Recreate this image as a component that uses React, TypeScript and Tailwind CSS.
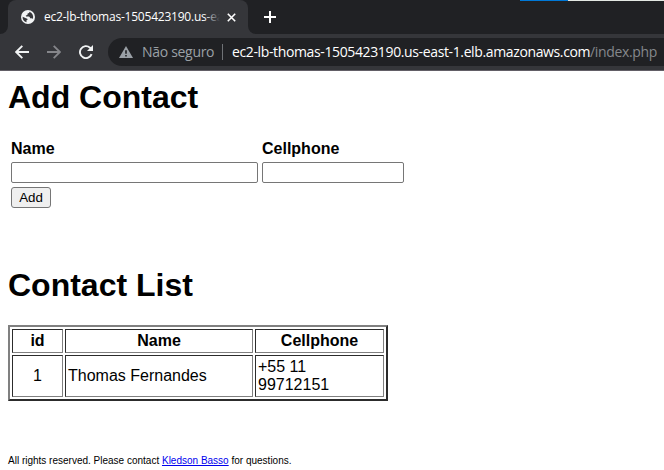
import React from 'react';

const uiFont = "font-['Open_Sans','Noto_Sans',sans-serif]";
const cell =
  'border border-t-[#2c2c2c] border-l-[#2c2c2c] border-r-[#808080] border-b-[#808080] flex items-center';

function GlobeIcon() {
  return (
    <svg className="shrink-0" width="14" height="14" viewBox="0 0 14 14">
      <circle cx="7" cy="7" r="7" fill="#f1f3f4" />
      <path
        d="M8.6 1.8c-.3 1-.8 1.5-2 1.6L6.4 5 4.8 5.6l.3 1h2.6c1 .1 1.2.6 1.3 1.6h1.4c.6 0 1 .3 1.3.8A5.4 5.4 0 0 0 8.6 1.8Z"
        fill="#35363a"
      />
      <path d="M1.6 6.8 5 8.2c.9.3 1.6.5 1.7 1.3l-1.2.8v1.9A5.4 5.4 0 0 1 1.6 6.8Z" fill="#35363a" />
    </svg>
  );
}

function TabStrip() {
  return (
    <div className="relative flex h-[34px] bg-[#35363a]">
      <div className="h-full w-2 rounded-br-lg bg-[#202124]" />
      <div className="flex w-[240px] bg-[#202124]">
        <div className="flex w-full items-center rounded-t-lg bg-[#35363a] pl-[13px] pr-[11px]">
          <GlobeIcon />
          <div className={`${uiFont} relative ml-[9px] w-[176px] text-[12px] leading-[18px] tracking-[-0.22px] whitespace-nowrap text-white`}>
            ec2-lb-thomas-1505423190.us-ea
            <div className="absolute inset-y-0 -right-1 w-5 bg-gradient-to-r from-transparent to-[#35363a] to-80%" />
          </div>
          <svg className="ml-[7px] shrink-0" width="9" height="9" viewBox="0 0 9 9">
            <path d="m.8.8 7.4 7.4m0-7.4L.8 8.2" stroke="#fff" strokeWidth="1.6" />
          </svg>
        </div>
      </div>
      <div className="flex flex-1 items-center rounded-bl-lg bg-[#202124] pl-4">
        <svg width="12" height="12" viewBox="0 0 12 12">
          <path d="M6 0v12M0 6h12" stroke="#fff" strokeWidth="2" />
        </svg>
      </div>
      <div className="absolute top-0 right-0 flex h-px w-[144px]">
        <div className="w-12 bg-[#0078d7]" />
        <div className="flex-1 bg-[#e3e8e3]" />
      </div>
    </div>
  );
}

function Toolbar() {
  return (
    <div className="flex h-[37px] border-b border-[#625e66] bg-[#35363a] pt-1">
      <div className="flex h-7 w-[108px] shrink-0 items-center pl-[15px]">
        <svg width="14" height="14" viewBox="0 0 14 14" fill="none" stroke="#f1f3f4" strokeWidth="1.9">
          <path d="M14 7H1.3M7.3.8 1.1 7l6.2 6.2" />
        </svg>
        <svg className="ml-[18px]" width="14" height="14" viewBox="0 0 14 14" fill="none" stroke="#85868a" strokeWidth="1.8">
          <path d="M0 7h12.7M6.7.8 12.9 7l-6.2 6.2" />
        </svg>
        <svg className="ml-[18px]" width="14" height="14" viewBox="0 0 14 14">
          <path d="M12.6 9.2A6 6 0 1 1 11 2.7l1.5 1.5" fill="none" stroke="#f1f3f4" strokeWidth="1.9" />
          <path d="M14 0v6H8Z" fill="#f1f3f4" />
        </svg>
      </div>
      <div className={`${uiFont} flex h-7 flex-1 items-center rounded-l-full bg-[#202124] pl-[11px] text-[14px] leading-5 whitespace-nowrap`}>
        <svg className="shrink-0" width="14" height="12" viewBox="0 0 14 12">
          <path d="M7 0 14 12H0Z" fill="#9aa0a6" />
          <path d="M7 4.2v3.6M7 9v1.5" stroke="#202124" strokeWidth="1.6" />
        </svg>
        <span className="ml-[9px] w-[73px] shrink-0 tracking-[-0.3px] text-[#9aa0a6]">Não seguro</span>
        <span className="ml-[7px] h-4 w-px shrink-0 bg-[#6f7276]" />
        <span className="ml-[9px] w-[358px] shrink-0 tracking-[-0.37px] text-white">
          ec2-lb-thomas-1505423190.us-east-1.elb.amazonaws.com
        </span>
        <span className="tracking-[-0.35px] text-[#85888c]">/index.php</span>
      </div>
    </div>
  );
}

function AddContact() {
  return (
    <section>
      <h1 className="text-[32px] leading-[37px] font-bold">Add Contact</h1>
      <div className="mt-6 ml-[3px] grid w-[393px] grid-cols-[247px_142px] gap-x-1">
        <label htmlFor="name" className="leading-[18px] font-bold">Name</label>
        <label htmlFor="phone" className="leading-[18px] font-bold">Cellphone</label>
        <input id="name" className="mt-1 h-[21px] w-full rounded-[2px] border border-[#767676] bg-white" />
        <input id="phone" className="mt-1 h-[21px] w-full rounded-[2px] border border-[#767676] bg-white" />
      </div>
      <button className="mt-1 ml-[3px] block h-[21px] w-10 rounded-[3px] border border-[#767676] bg-[#efefef] text-[13.333px] leading-[19px]">
        Add
      </button>
    </section>
  );
}

function ContactList() {
  return (
    <section className="mt-[59px]">
      <h1 className="text-[32px] leading-[37px] font-bold">Contact List</h1>
      <div className="mt-[21px] grid w-[380px] grid-cols-[51px_188px_129px] grid-rows-[24px_42px] gap-0.5 border-2 border-t-[#808080] border-r-[#2c2c2c] border-b-[#2c2c2c] border-l-[#808080] p-0.5 leading-[18px]">
        <div className={`${cell} justify-center font-bold`}>id</div>
        <div className={`${cell} justify-center font-bold`}>Name</div>
        <div className={`${cell} justify-center font-bold`}>Cellphone</div>
        <div className={`${cell} justify-center`}>1</div>
        <div className={`${cell} pl-0.5`}>Thomas Fernandes</div>
        <div className={`${cell} pl-0.5`}>
          <span>+55 11<br />99712151</span>
        </div>
      </div>
    </section>
  );
}

export default function App() {
  return (
    <div className="h-[470px] w-[664px] overflow-hidden bg-white">
      <TabStrip />
      <Toolbar />
      <main className="px-2 pt-[8px] font-['Liberation_Sans',Arial,sans-serif] text-base text-black">
        <AddContact />
        <ContactList />
        <footer className="mt-[54px] text-[10px] leading-3">
          All rights reserved. Please contact{' '}
          <a href="#" className="text-[#0000ee] underline">Kledson Basso</a> for questions.
        </footer>
      </main>
    </div>
  );
}
